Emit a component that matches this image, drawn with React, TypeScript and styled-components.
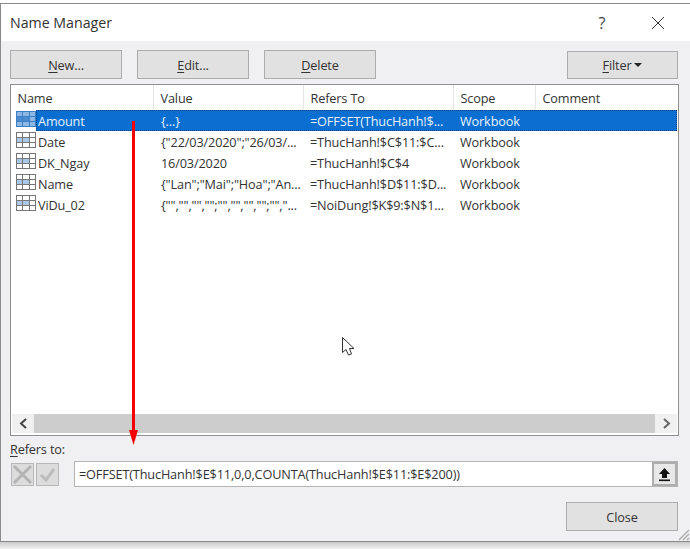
import React from "react";
import styled, { createGlobalStyle } from "styled-components";

const Global = createGlobalStyle`
  html, body { margin: 0; padding: 0; background: #ffffff; }
  body { font-family: "Open Sans", "Noto Sans", "Liberation Sans", sans-serif; color: #222; }
  #root { width: 690px; height: 549px; overflow: hidden; }
`;

const Page = styled.div`
  position: relative;
  width: 690px;
  height: 549px;
  padding-top: 3px;
  box-sizing: border-box;
  background: linear-gradient(to bottom, #fff 0, #fff 536px, #c9c9c9 542px, #f2f2f2 549px);
`;

const Dialog = styled.div`
  height: 539px;
  box-sizing: border-box;
  border: 1px solid #8a8a8a;
  border-right: none;
  background: #f0f0f2;
  display: flex;
  flex-direction: column;
`;

const TitleBar = styled.div`
  height: 37px;
  flex: none;
  background: #fff;
  display: flex;
  align-items: center;
  padding: 0 0 0 9px;
`;

const Title = styled.div`
  flex: 1;
  font-size: 14.2px;
  color: #333;
`;

const Help = styled.div`
  width: 20px;
  text-align: center;
  font-size: 16px;
  color: #444;
  margin-right: 39px;
`;

const CloseX = styled.svg`
  width: 14px;
  height: 14px;
  margin-right: 25px;
`;

const Body = styled.div`
  flex: 1;
  display: flex;
  flex-direction: column;
  padding: 9px 12px 0 9px;
  font-size: 12.7px;
  letter-spacing: -0.14px;
`;

const Toolbar = styled.div`
  display: flex;
  height: 29px;
  gap: 15px;
  align-items: flex-end;
`;

const Btn = styled.button<{ $filter?: boolean }>`
  width: ${(p) => (p.$filter ? 111 : 112)}px;
  height: ${(p) => (p.$filter ? 28 : 29)}px;
  box-sizing: border-box;
  padding: 0;
  border: 1px solid #acacac;
  background: #e1e1e1;
  font-family: inherit;
  font-size: inherit;
  letter-spacing: inherit;
  color: #333;
  display: flex;
  align-items: center;
  justify-content: center;
`;

const Spacer = styled.div`
  flex: 1;
`;

const Key = styled.span`
  text-decoration: underline;
  text-underline-offset: 2px;
  text-decoration-thickness: 1px;
`;

const Caret = styled.span`
  width: 0;
  height: 0;
  margin-left: 3px;
  border-left: 4px solid transparent;
  border-right: 4px solid transparent;
  border-top: 4px solid #222;
`;

const ListBox = styled.div`
  margin-top: 5px;
  margin-right: -1px;
  height: 352px;
  box-sizing: border-box;
  border: 1px solid #8f8f8f;
  background: #fff;
  display: flex;
  flex-direction: column;
`;

const HeaderRow = styled.div`
  height: 25px;
  flex: none;
  display: flex;
  align-items: stretch;
`;

const HeadCell = styled.div<{ $w: number }>`
  width: ${(p) => p.$w}px;
  flex: none;
  box-sizing: border-box;
  padding: 3px 0 0 6.5px;
  line-height: 20px;
  color: #333;
  border-right: 1px solid #e5e5e5;
  &:last-child { border-right: none; flex: 1; }
`;

const Rows = styled.div`
  flex: 1;
  padding-right: 1px;
`;

const Row = styled.div`
  height: 21px;
  display: flex;
  align-items: center;
`;

const IconSlot = styled.div`
  width: 25px;
  flex: none;
  padding-left: 5px;
  box-sizing: border-box;
  display: flex;
  height: 100%;
  align-items: flex-start;
  padding-top: 1px;
`;

const Cells = styled.div<{ $selected?: boolean }>`
  flex: 1;
  height: 100%;
  display: flex;
  align-items: center;
  box-sizing: border-box;
  background: ${(p) => (p.$selected ? "#0a6fd0" : "transparent")};
  color: ${(p) => (p.$selected ? "#e8f2fc" : "#333")};
  outline: ${(p) => (p.$selected ? "1px dotted #0b3f78" : "none")};
  outline-offset: -1px;
`;

const Cell = styled.div<{ $w: number }>`
  width: ${(p) => p.$w}px;
  flex: none;
  padding-left: 2px;
  box-sizing: border-box;
  white-space: nowrap;
  overflow: hidden;
`;

const ScrollBar = styled.div`
  height: 19px;
  flex: none;
  margin: 0 1px 2px 1px;
  display: flex;
  background: #f0f0f0;
`;

const ScrollArrow = styled.div`
  width: 22px;
  flex: none;
  display: flex;
  align-items: center;
  justify-content: center;
`;

const Thumb = styled.div`
  flex: 1;
  background: #cdcdcd;
`;

const RefLabel = styled.div`
  margin-top: 4px;
  line-height: 18px;
  color: #333;
`;

const RefRow = styled.div`
  margin-top: 3px;
  height: 26px;
  display: flex;
  align-items: center;
`;

const EditBtn = styled.div`
  width: 23px;
  height: 23px;
  margin: 0 1px;
  box-sizing: border-box;
  border: 1px solid #b8b8b8;
  background: #dcdcdc;
  display: flex;
  align-items: center;
  justify-content: center;
`;

const RefField = styled.div`
  margin-left: 14px;
  flex: 1;
  height: 26px;
  box-sizing: border-box;
  border: 1px solid #b4b4b4;
  background: #fff;
  display: flex;
  align-items: center;
  justify-content: space-between;
  padding-left: 4px;
  color: #333;
`;

const Collapse = styled.div`
  width: 25px;
  height: 24px;
  box-sizing: border-box;
  border: 2px solid #adadad;
  background: #e8e8e8;
  display: flex;
  align-items: center;
  justify-content: center;
  flex: none;
`;

const Footer = styled.div`
  margin-top: 15px;
  display: flex;
  justify-content: flex-end;
`;

const Grip = styled.svg`
  position: absolute;
  right: 0;
  bottom: 8px;
  width: 14px;
  height: 14px;
`;

const Arrow = styled.svg`
  position: absolute;
  left: 124px;
  top: 118px;
  width: 18px;
  height: 330px;
`;

const Pointer = styled.svg`
  position: absolute;
  left: 341px;
  top: 336px;
  width: 16px;
  height: 22px;
`;

function NameIcon({ filled }: { filled?: boolean }) {
  return (
    <svg width="20" height="17" viewBox="0 0 20 17">
      <rect x="0.5" y="0.5" width="19" height="15" fill={filled ? "#8db8e6" : "#fff"} stroke={filled ? "#3f7fc4" : "#777"} />
      <rect x="1" y="5" width="12" height="5" fill={filled ? "#4a8bd0" : "#a9c8ea"} />
      <path d="M0 5.5H20M0 10.5H20M6.5 0V16M13.5 0V16" stroke={filled ? "#3f7fc4" : "#777"} strokeWidth="1" fill="none" />
    </svg>
  );
}

const cols = [143, 150, 150, 82, 142];
const rows = [
  { n: "Amount", v: "{...}", r: "=OFFSET(ThucHanh!$...", s: "Workbook" },
  { n: "Date", v: '{"22/03/2020";"26/03/...', r: "=ThucHanh!$C$11:$C...", s: "Workbook" },
  { n: "DK_Ngay", v: "16/03/2020", r: "=ThucHanh!$C$4", s: "Workbook" },
  { n: "Name", v: '{"Lan";"Mai";"Hoa";"An...', r: "=ThucHanh!$D$11:$D...", s: "Workbook" },
  { n: "ViDu_02", v: '{"","","","";"","","","";"","...', r: "=NoiDung!$K$9:$N$1...", s: "Workbook" },
];

export default function App() {
  return (
    <Page>
      <Global />
      <Dialog>
        <TitleBar>
          <Title>Name Manager</Title>
          <Help>?</Help>
          <CloseX viewBox="0 0 14 14">
            <path d="M1 1L13 13M13 1L1 13" stroke="#333" strokeWidth="1" fill="none" />
          </CloseX>
        </TitleBar>
        <Body>
          <Toolbar>
            <Btn><span><Key>N</Key>ew...</span></Btn>
            <Btn><span><Key>E</Key>dit...</span></Btn>
            <Btn><span><Key>D</Key>elete</span></Btn>
            <Spacer />
            <Btn $filter><span><Key>F</Key>ilter</span><Caret /></Btn>
          </Toolbar>
          <ListBox>
            <HeaderRow>
              {["Name", "Value", "Refers To", "Scope", "Comment"].map((h, i) => (
                <HeadCell key={h} $w={cols[i]}>{h}</HeadCell>
              ))}
            </HeaderRow>
            <Rows>
              {rows.map((row, i) => (
                <Row key={row.n}>
                  <IconSlot><NameIcon filled={i === 0} /></IconSlot>
                  <Cells $selected={i === 0}>
                    <Cell $w={123}>{row.n}</Cell>
                    <Cell $w={149}>{row.v}</Cell>
                    <Cell $w={150}>{row.r}</Cell>
                    <Cell $w={82}>{row.s}</Cell>
                  </Cells>
                </Row>
              ))}
            </Rows>
            <ScrollBar>
              <ScrollArrow>
                <svg width="9" height="11" viewBox="0 0 9 11"><path d="M7 1L2 5.5L7 10" stroke="#444" strokeWidth="2" fill="none" /></svg>
              </ScrollArrow>
              <Thumb />
              <ScrollArrow>
                <svg width="9" height="11" viewBox="0 0 9 11"><path d="M2 1L7 5.5L2 10" stroke="#666" strokeWidth="2" fill="none" /></svg>
              </ScrollArrow>
            </ScrollBar>
          </ListBox>
          <RefLabel><Key>R</Key>efers to:</RefLabel>
          <RefRow>
            <EditBtn>
              <svg width="21" height="21" viewBox="0 0 21 21"><path d="M2 2L19 19M19 2L2 19" stroke="#b4b4b4" strokeWidth="3" fill="none" /></svg>
            </EditBtn>
            <EditBtn>
              <svg width="17" height="15" viewBox="0 0 17 15"><path d="M2 8L7 13L15 2" stroke="#bcbcbc" strokeWidth="3" fill="none" /></svg>
            </EditBtn>
            <RefField>
              <span>=OFFSET(ThucHanh!$E$11,0,0,COUNTA(ThucHanh!$E$11:$E$200))</span>
              <Collapse>
                <svg width="13" height="15" viewBox="0 0 13 15"><path d="M6.5 1L12 7H9V11H4V7H1Z" fill="#111" /><rect x="1" y="12.5" width="11" height="1.6" fill="#111" /></svg>
              </Collapse>
            </RefField>
          </RefRow>
          <Footer>
            <Btn>Close</Btn>
          </Footer>
        </Body>
      </Dialog>
      <Grip viewBox="0 0 14 14">
        <path d="M13 3L3 13M13 7L7 13M13 11L11 13" stroke="#a8a8a8" strokeWidth="1.2" fill="none" />
      </Grip>
      <Arrow viewBox="0 0 18 330">
        <path d="M9.5 3V314" stroke="#f40000" strokeWidth="3" fill="none" />
        <path d="M5 312H14L9.5 327Z" fill="#f40000" />
      </Arrow>
      <Pointer viewBox="0 0 16 22">
        <path d="M1.5 1.5V16.5L5 13.5L7.5 19L10.5 18L8.5 12.5H13Z" fill="#fff" stroke="#333" strokeWidth="1" />
      </Pointer>
    </Page>
  );
}
